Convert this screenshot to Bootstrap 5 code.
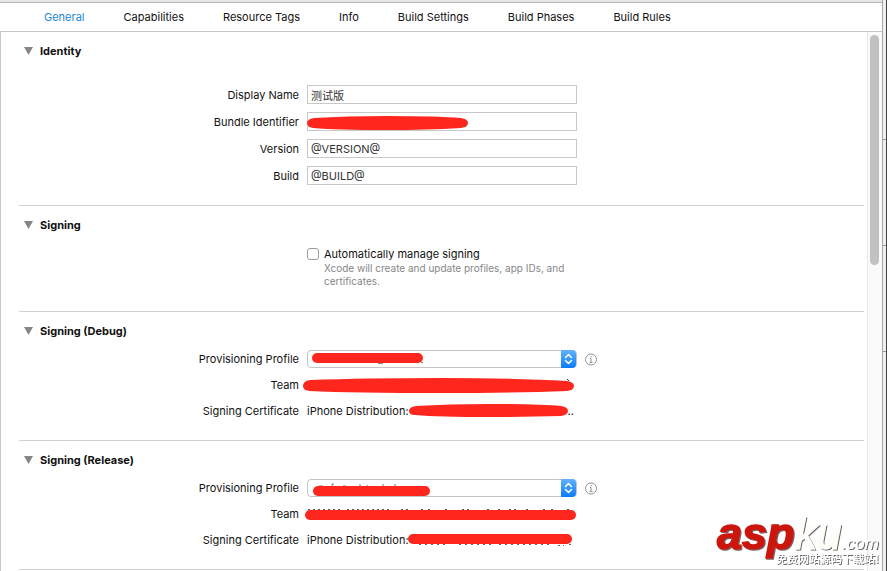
<!DOCTYPE html>
<html lang="en">
<head>
<meta charset="utf-8">
<meta name="viewport" content="width=device-width, initial-scale=1">
<title>Target settings</title>
<link href="https://cdn.jsdelivr.net/npm/bootstrap@5.3.0/dist/css/bootstrap.min.css" rel="stylesheet">
<style>
  body { font: 11px/16px Inter, "Noto Sans CJK SC", sans-serif; color: #111; background: #fff; }
  .top-strip { height: 3px; background: #e6e6e6; border-bottom: 1px solid #b4b4b4; }
  .tabs { height: 29px; gap: 39px; padding: 0 44px; border-bottom: 1px solid #c8c8c8; }
  .tabs .nav-link { padding: 0; color: #111; }
  .tabs .nav-link.active { color: #1c87d6; }
  .pane { border-left: 1px solid #c8c8c8; padding: 0 3px 0 18px; }
  .group { padding: 9px 0 20px; border-bottom: 1px solid #d0d0d0; }
  .group-title { font-size: 11px; line-height: 20px; font-weight: 700; gap: 7px; margin: 0 0 9px; padding-left: 5px; }
  .form-rows { gap: 8px; }
  .roomy { margin-top: 24px; }
  .form-line { gap: 8px; min-height: 18px; }
  .form-line > .caption { flex: 0 0 280px; text-align: right; }
  .field { flex: 0 1 270px; }
  .field input { width: 100%; height: 19px; border: 1px solid #c8c8c8; padding: 0 3px; font-size: 11px; color: #333; display: block; }
  .field select { width: 100%; height: 18px; border: 1px solid #c4c4c4; border-radius: 4px; appearance: none; background: #fff; display: block; padding: 0 20px 0 6px; }
  .stepper { position: absolute; right: 1px; top: 0; pointer-events: none; }
  .cover { position: absolute; left: 0; top: 4px; pointer-events: none; }
  .cover-select { left: 5px; top: 3px; }
  .cover-select.low { left: 6px; top: 6px; }
  .scribble { fill: #ff261e; display: block; flex: none; }
  .team-value { margin-left: -4px; }
  .info-btn { width: 13px; height: 13px; }
  .check-block { margin: 11px 0 3px 288px; gap: 5px; }
  .check-block input { width: 12px; height: 12px; margin: 2px 0 0; border: 1px solid #9c9c9c; border-radius: 3px; appearance: none; background: #fff; flex: none; }
  .check-text { max-width: 256px; }
  .hint { line-height: 13px; color: #868686; font-size: 10px; }
  .track { width: 15px; background: #fafafa; border-left: 1px solid #e9e9e9; padding: 3px 2px 0; }
  .thumb { width: 9px; height: 43%; border-radius: 5px; background: #c1c1c1; }
  .edge { width: 5px; border-left: 1px solid #a8a8a8; border-right: 1px solid #444; background: #f0f0f0; padding-top: 139px; gap: 105px; }
  .edge hr { margin: 0; opacity: 1; border-color: #999; }
  .stamp { position: absolute; right: 6px; bottom: 0; pointer-events: none; font-family: "Liberation Sans", sans-serif; font-style: italic; }
</style>
</head>
<body>
<div class="vh-100 d-flex overflow-hidden position-relative">
  <div class="flex-grow-1 d-flex flex-column">
    <div class="top-strip"></div>
    <nav class="nav tabs flex-nowrap align-items-center text-nowrap flex-shrink-0" aria-label="Target settings">
      <a class="nav-link active" href="#general" aria-current="page">General</a>
      <a class="nav-link" href="#capabilities">Capabilities</a>
      <a class="nav-link" href="#resource-tags">Resource Tags</a>
      <a class="nav-link" href="#info">Info</a>
      <a class="nav-link" href="#build-settings">Build Settings</a>
      <a class="nav-link" href="#build-phases">Build Phases</a>
      <a class="nav-link" href="#build-rules">Build Rules</a>
    </nav>
    <div class="d-flex flex-grow-1 overflow-hidden">
      <main class="pane flex-grow-1" id="general">
        <section class="group">
          <h2 class="group-title d-flex align-items-center"><svg width="9" height="8" aria-hidden="true"><path d="M0 0h9L4.500 8z" fill="#868686"/></svg>Identity</h2>
          <div class="form-rows roomy d-flex flex-column">
            <div class="form-line d-flex align-items-center"><label class="caption" for="display-name">Display Name</label><div class="field"><input id="display-name" type="text" value="测试版"></div></div>
            <div class="form-line d-flex align-items-center"><label class="caption" for="bundle">Bundle Identifier</label><div class="field position-relative"><input id="bundle" type="text"><svg class="scribble cover" width="161" height="15" aria-hidden="true"><path d="M0 7Q0 3 7 2Q40 0 80 0Q130 0 154 2Q161 3 161 7Q161 11 154 12Q120 14 80 14Q30 14 6 12Q0 11 0 7z"/></svg></div></div>
            <div class="form-line d-flex align-items-center"><label class="caption" for="version">Version</label><div class="field"><input id="version" type="text" value="@VERSION@"></div></div>
            <div class="form-line d-flex align-items-center"><label class="caption" for="build">Build</label><div class="field"><input id="build" type="text" value="@BUILD@"></div></div>
          </div>
        </section>

        <section class="group">
          <h2 class="group-title d-flex align-items-center"><svg width="9" height="8" aria-hidden="true"><path d="M0 0h9L4.500 8z" fill="#868686"/></svg>Signing</h2>
          <div class="check-block d-flex align-items-start">
            <input id="auto-sign" type="checkbox" aria-describedby="auto-hint">
            <div class="check-text"><label class="d-block" for="auto-sign">Automatically manage signing</label><div class="hint" id="auto-hint">Xcode will create and update profiles, app IDs, and certificates.</div></div>
          </div>
        </section>

        <section class="group">
          <h2 class="group-title d-flex align-items-center"><svg width="9" height="8" aria-hidden="true"><path d="M0 0h9L4.500 8z" fill="#868686"/></svg>Signing (Debug)</h2>
          <div class="form-rows d-flex flex-column">
            <div class="form-line d-flex align-items-center"><label class="caption" for="debug-profile">Provisioning Profile</label>
              <div class="field position-relative"><select id="debug-profile"><option></option></select>
                <svg class="scribble cover cover-select" width="112" height="13" aria-hidden="true"><path d="M66 10.500h5M109 9.500h2" stroke="#888"/><rect y="0" width="111" height="10" rx="5"/></svg>
                <svg class="stepper" width="15" height="18" aria-hidden="true"><defs><linearGradient id="blue" x2="0" y2="1"><stop stop-color="#62b2fb"/><stop offset="1" stop-color="#0a7bfa"/></linearGradient></defs><path d="M0 0h11q4 0 4 4v10q0 4-4 4H0z" fill="url(#blue)"/><path d="M4.500 7.500l3-3 3 3M4.500 10.500l3 3 3-3" fill="none" stroke="#fff" stroke-width="1.500" stroke-linecap="round"/></svg></div>
              <button class="info-btn btn p-0 border-0 d-flex" type="button" aria-label="Profile details"><svg width="13" height="13"><circle cx="6" cy="6.500" r="5.500" fill="none" stroke="#929292"/><path d="M6 3v1.500M5 5.500h1v4M4.500 9.500h3" fill="none" stroke="#929292"/></svg></button></div>
            <div class="form-line d-flex align-items-center"><span class="caption">Team</span><div class="team-value"><svg class="scribble" width="271" height="16" viewBox="0 -1 271 16" aria-label="Hidden"><path d="M264 1l2 2" stroke="#333"/><path d="M0 8Q0 3 7 2Q60 0 140 0Q210 0 264 3Q271 4 271 8Q271 12 264 13Q210 15 140 15Q50 15 6 13Q0 12 0 8z"/></svg></div></div>
            <div class="form-line d-flex align-items-center"><span class="caption">Signing Certificate</span><div class="d-flex align-items-center"><span>iPhone Distribution:</span><svg class="scribble" width="159" height="14" aria-label="Hidden"><path d="M0 7Q0 3 7 2Q40 0 80 0Q130 0 152 2Q159 3 159 7Q159 11 152 12Q120 13 80 13Q30 13 6 11Q0 11 0 7z"/></svg><span>..</span></div></div>
          </div>
        </section>

        <section class="group">
          <h2 class="group-title d-flex align-items-center"><svg width="9" height="8" aria-hidden="true"><path d="M0 0h9L4.500 8z" fill="#868686"/></svg>Signing (Release)</h2>
          <div class="form-rows d-flex flex-column">
            <div class="form-line d-flex align-items-center"><label class="caption" for="release-profile">Provisioning Profile</label>
              <div class="field position-relative"><select id="release-profile"><option></option></select>
                <svg class="scribble cover cover-select low" width="118" height="12" viewBox="0 -1 118 12" overflow="visible" aria-hidden="true"><path d="M6 0h4M19 0v-2h2M30 0h3M47 0v-2M54 0v-1M70 0v-2M82 0v-2" fill="none" stroke="#777"/><rect width="117" height="10" rx="5"/></svg>
                <svg class="stepper" width="15" height="18" aria-hidden="true"><path d="M0 0h11q4 0 4 4v10q0 4-4 4H0z" fill="url(#blue)"/><path d="M4.500 7.500l3-3 3 3M4.500 10.500l3 3 3-3" fill="none" stroke="#fff" stroke-width="1.500" stroke-linecap="round"/></svg></div>
              <button class="info-btn btn p-0 border-0 d-flex" type="button" aria-label="Profile details"><svg width="13" height="13"><circle cx="6" cy="6.500" r="5.500" fill="none" stroke="#929292"/><path d="M6 3v1.500M5 5.500h1v4M4.500 9.500h3" fill="none" stroke="#929292"/></svg></button></div>
            <div class="form-line d-flex align-items-center"><span class="caption">Team</span><div class="team-value"><svg class="scribble" width="273" height="12" viewBox="-2 0 273 12" aria-label="Hidden"><path d="M3 1.500h34M42 1.500h43M96 1.500h9M116 1.500h2M123 1.500h2M140 1.500h2M157 1.500h7M182 1.500h2M193 1.500h2M204 1.500h9M221 1.500h3M238 1.500h2M246 1.500h2M262 1.500h3" stroke="#555" stroke-dasharray="2 3"/><rect y="2" width="271" height="10" rx="5"/></svg></div></div>
            <div class="form-line d-flex align-items-center"><span class="caption">Signing Certificate</span><div class="d-flex align-items-center"><span>iPhone Distribution:</span><svg class="scribble" width="163" height="13" overflow="visible" aria-label="Hidden"><path d="M10 10.500h28M50 10.500h34M90 10.500h54M149 11.500h3M154 11.500h1M160 10.500h2" stroke="#666" stroke-dasharray="2 4"/><rect x="-1" width="164" height="10" rx="5"/></svg></div></div>
          </div>
        </section>
      </main>
      <div class="track flex-shrink-0"><div class="thumb"></div></div>
    </div>
  </div>
  <div class="edge flex-shrink-0 d-flex flex-column"><hr><hr><hr></div>
  <div class="stamp">
    <svg class="d-block" width="169" height="60" role="img" aria-label="aspku.com">
      <defs><filter id="shade" x="-10%" y="-10%" width="120%" height="130%"><feDropShadow dx="1" dy="1" stdDeviation="0.500" flood-color="#555" flood-opacity="0.900"/></filter></defs>
      <g filter="url(#shade)">
        <text x="5" y="38" font-size="45" font-weight="700" fill="#cc1408" stroke="#cc1408" stroke-width="1.500">asp</text>
        <text x="83" y="38" font-size="44" fill="#fffdf8" stroke="#fffdf8" stroke-width="1">ku</text>
        <text x="130" y="38" font-size="17" fill="#fff">.com</text>
        <text x="64" y="52" font-size="11" font-weight="500" font-style="normal" font-family="Noto Sans CJK SC, sans-serif" fill="#fff">免费网站源码下载站!</text>
      </g>
    </svg>
  </div>
</div>
<script src="https://cdn.jsdelivr.net/npm/bootstrap@5.3.0/dist/js/bootstrap.bundle.min.js"></script>
</body>
</html>
